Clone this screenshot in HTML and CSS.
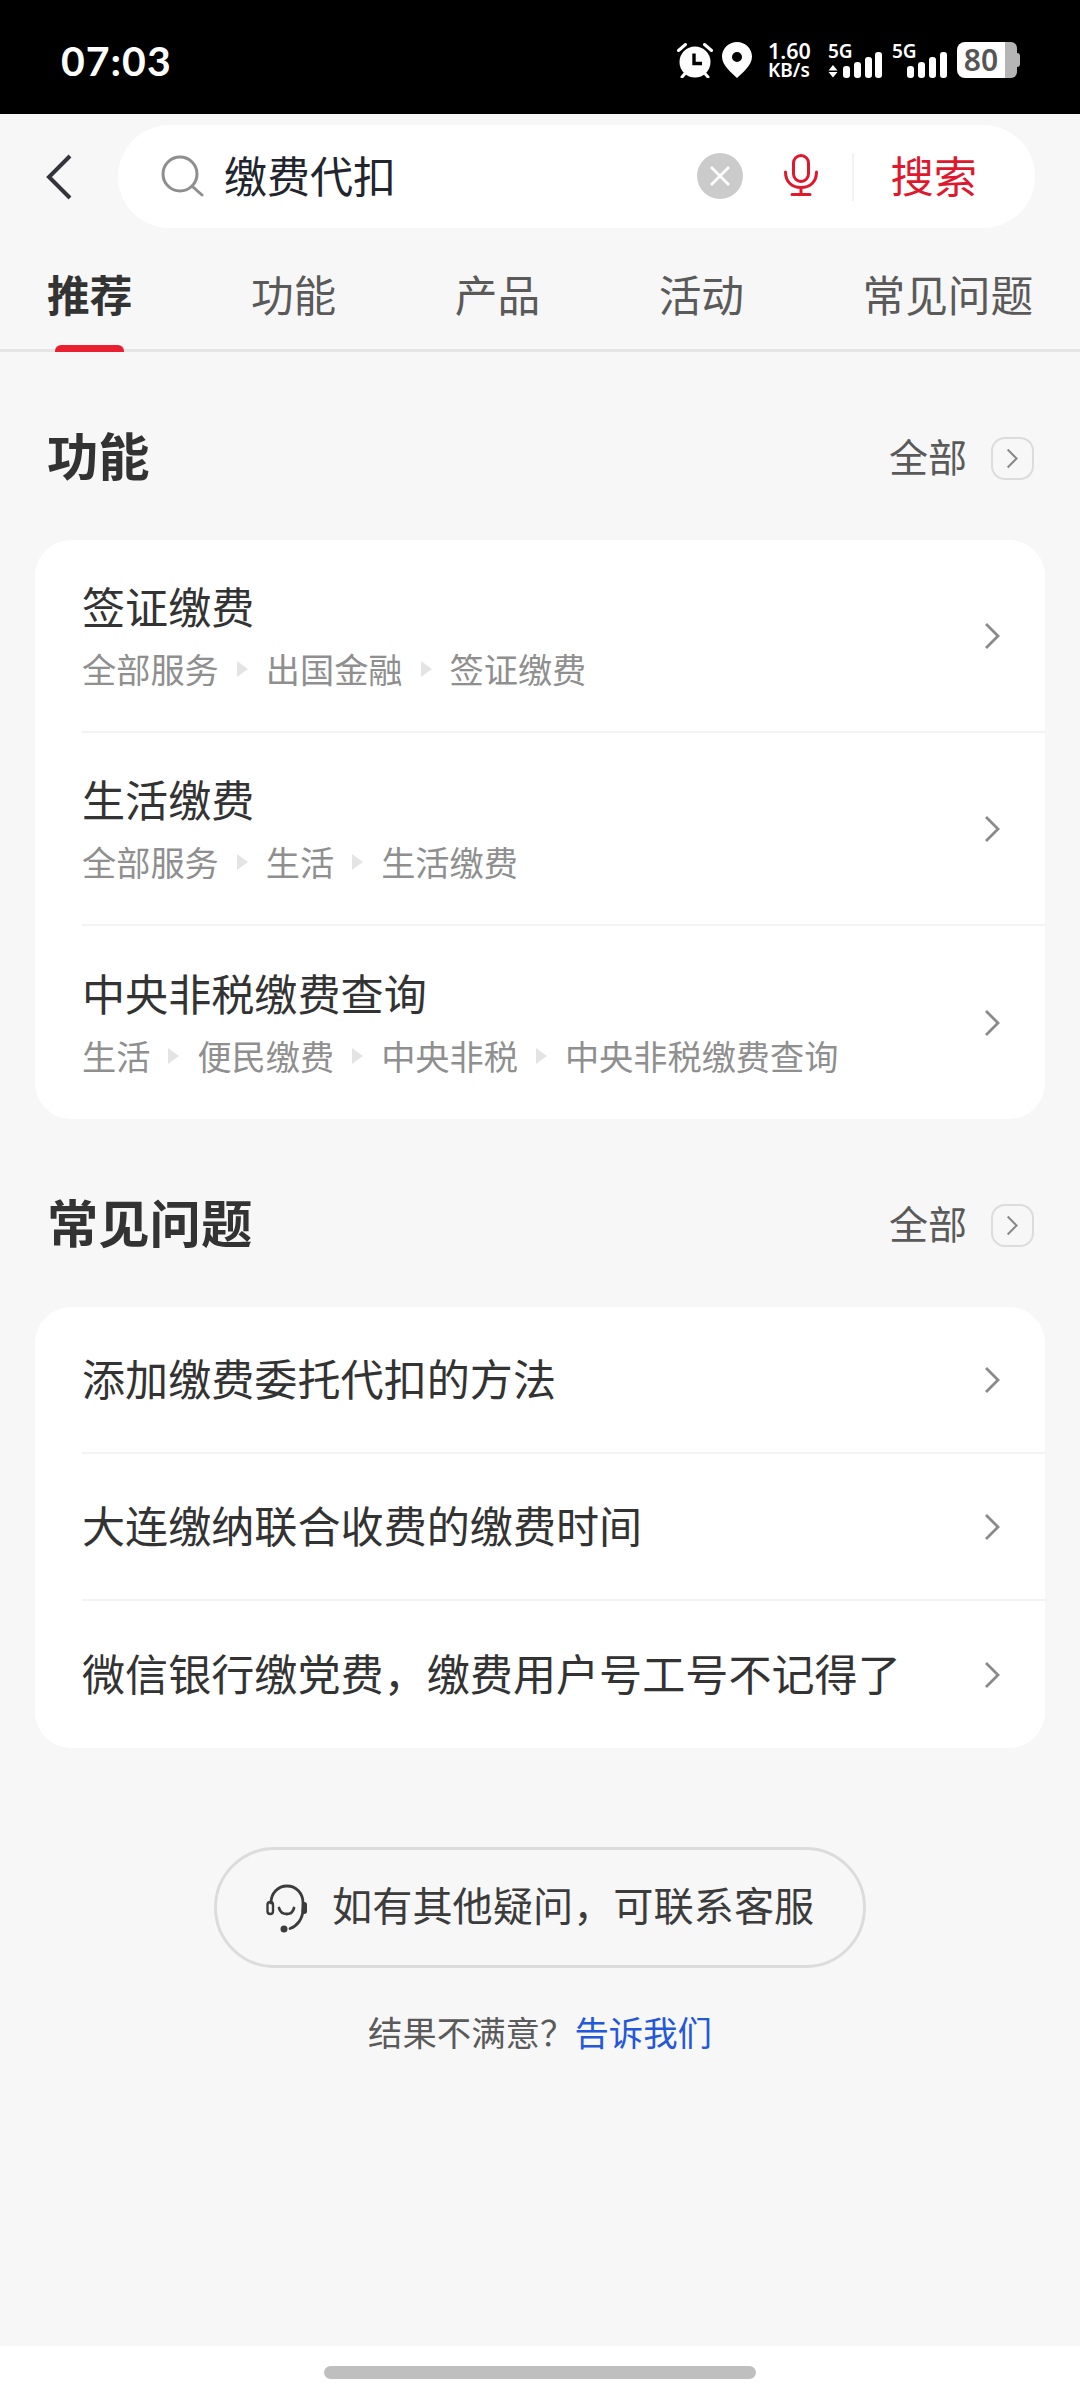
FILE: index.html
```html
<!DOCTYPE html>
<html lang="zh-CN">
<head>
<meta charset="utf-8">
<title>搜索</title>
<link rel="stylesheet" href="styles.css">
</head>
<body>
<div class="page">
  <div class="status">
    <span class="time">07:03</span>
    <div class="status-icons">
      <svg class="ic-alarm" viewBox="0 0 36 36" width="36" height="36">
        <circle cx="18" cy="20" r="15.5" fill="#fff"/>
        <path d="M17 11.5V21.5H25" fill="none" stroke="#000" stroke-width="3.4"/>
        <path d="M1.5 8.5 8.5 2.5M34.5 8.5 27.5 2.5M5 35l3.5-4M31 35l-3.5-4" stroke="#fff" stroke-width="3" stroke-linecap="round"/>
      </svg>
      <svg class="ic-pin" viewBox="0 0 30 36" width="30" height="36">
        <path fill-rule="evenodd" fill="#fff" d="M15 0C6.7 0 0 6.5 0 14.6 0 24 10.5 31.7 15 36c4.5-4.3 15-12 15-21.4C30 6.500 23.300 0 15 0Zm0 10a5 5 0 1 1 0 10 5 5 0 0 1 0-10Z"/>
      </svg>
      <div class="speed"><span class="speed-num">1.60</span><span class="speed-unit">KB/s</span></div>
      <div class="net net-first">
        <span class="net-label">5G</span>
        <svg viewBox="0 0 54 26" width="54" height="26" class="net-bars">
          <path fill="#fff" d="M5 13 9.500 18.500H.5ZM5 25.500 .5 20H9.500Z"/>
          <rect x="15" y="14" width="7" height="12" rx="3" fill="#fff"/>
          <rect x="26" y="10" width="7" height="16" rx="3" fill="#fff"/>
          <rect x="37" y="5" width="7" height="21" rx="3" fill="#fff"/>
          <rect x="47" y="0" width="7" height="26" rx="3" fill="#fff"/>
        </svg>
      </div>
      <div class="net net-second">
        <span class="net-label">5G</span>
        <svg viewBox="0 0 40 26" width="40" height="26" class="net-bars">
          <rect x="0" y="14" width="7" height="12" rx="3" fill="#fff"/>
          <rect x="11" y="10" width="7" height="16" rx="3" fill="#fff"/>
          <rect x="22" y="5" width="7" height="21" rx="3" fill="#fff"/>
          <rect x="33" y="0" width="7" height="26" rx="3" fill="#fff"/>
        </svg>
      </div>
      <div class="battery"><span class="battery-num">80</span><span class="battery-rest"></span><span class="battery-nub"></span></div>
    </div>
  </div>

  <div class="search-row">
    <svg class="back" viewBox="0 0 26 46" width="26" height="46"><path d="M24 2 3 23l21 21" fill="none" stroke="#33343c" stroke-width="4"/></svg>
    <div class="search-box">
      <svg class="lens" viewBox="0 0 44 44" width="44" height="44">
        <circle cx="20" cy="20" r="17" fill="none" stroke="#8e8e8e" stroke-width="3"/>
        <path d="M33 33l9 8" stroke="#8e8e8e" stroke-width="3" stroke-linecap="round"/>
      </svg>
      <span class="query">缴费代扣</span>
      <svg class="clear" viewBox="0 0 46 46" width="46" height="46">
        <circle cx="23" cy="23" r="23" fill="#cbcbcb"/>
        <path d="M14 14l18 18M32 14 14 32" stroke="#fff" stroke-width="2.600"/>
      </svg>
      <svg class="mic" viewBox="0 0 34 42" width="34" height="42">
        <rect x="9.500" y="1.500" width="15" height="26" rx="7.500" fill="none" stroke="#e0182d" stroke-width="3"/>
        <path d="M1.500 18c0 10 6.500 15.500 15.500 15.500S32.500 28 32.500 18M17 33.500V40M8 40.500H26" fill="none" stroke="#e0182d" stroke-width="3" stroke-linecap="round"/>
      </svg>
      <span class="search-sep"></span>
      <span class="search-btn">搜索</span>
    </div>
  </div>

  <nav class="tabs">
    <span class="tab tab-active">推荐</span>
    <span class="tab">功能</span>
    <span class="tab">产品</span>
    <span class="tab">活动</span>
    <span class="tab">常见问题</span>
  </nav>

  <main class="content">
    <section class="section">
      <div class="section-head">
        <h2 class="section-title">功能</h2>
        <span class="more">全部</span>
        <span class="more-box"><svg viewBox="0 0 16 26" width="13" height="21"><path d="M2 2l11 11L2 24" fill="none" stroke="#8a8a8a" stroke-width="2.600"/></svg></span>
      </div>
      <div class="card">
        <div class="row row-tall">
          <div class="row-text">
            <div class="row-title">签证缴费</div>
            <div class="crumbs"><span>全部服务</span><i class="tri"></i><span>出国金融</span><i class="tri"></i><span>签证缴费</span></div>
          </div>
          <svg class="chev" viewBox="0 0 16 28" width="16" height="28"><path d="M2 2l12 12L2 26" fill="none" stroke="#8a8a8a" stroke-width="2.800"/></svg>
        </div>
        <div class="row row-tall">
          <div class="row-text">
            <div class="row-title">生活缴费</div>
            <div class="crumbs"><span>全部服务</span><i class="tri"></i><span>生活</span><i class="tri"></i><span>生活缴费</span></div>
          </div>
          <svg class="chev" viewBox="0 0 16 28" width="16" height="28"><path d="M2 2l12 12L2 26" fill="none" stroke="#8a8a8a" stroke-width="2.800"/></svg>
        </div>
        <div class="row row-tall">
          <div class="row-text">
            <div class="row-title">中央非税缴费查询</div>
            <div class="crumbs"><span>生活</span><i class="tri"></i><span>便民缴费</span><i class="tri"></i><span>中央非税</span><i class="tri"></i><span>中央非税缴费查询</span></div>
          </div>
          <svg class="chev" viewBox="0 0 16 28" width="16" height="28"><path d="M2 2l12 12L2 26" fill="none" stroke="#8a8a8a" stroke-width="2.800"/></svg>
        </div>
      </div>
    </section>

    <section class="section">
      <div class="section-head">
        <h2 class="section-title">常见问题</h2>
        <span class="more">全部</span>
        <span class="more-box"><svg viewBox="0 0 16 26" width="13" height="21"><path d="M2 2l11 11L2 24" fill="none" stroke="#8a8a8a" stroke-width="2.600"/></svg></span>
      </div>
      <div class="card">
        <div class="row row-short">
          <div class="row-title">添加缴费委托代扣的方法</div>
          <svg class="chev" viewBox="0 0 16 28" width="16" height="28"><path d="M2 2l12 12L2 26" fill="none" stroke="#8a8a8a" stroke-width="2.800"/></svg>
        </div>
        <div class="row row-short">
          <div class="row-title">大连缴纳联合收费的缴费时间</div>
          <svg class="chev" viewBox="0 0 16 28" width="16" height="28"><path d="M2 2l12 12L2 26" fill="none" stroke="#8a8a8a" stroke-width="2.800"/></svg>
        </div>
        <div class="row row-short">
          <div class="row-title">微信银行缴党费，缴费用户号工号不记得了</div>
          <svg class="chev" viewBox="0 0 16 28" width="16" height="28"><path d="M2 2l12 12L2 26" fill="none" stroke="#8a8a8a" stroke-width="2.800"/></svg>
        </div>
      </div>
    </section>

    <div class="service-wrap">
      <div class="service">
        <svg class="headset" viewBox="0 0 42 50" width="42" height="50">
          <path d="M5 20C5 10 12 3 21 3s16 7 16 17M37 26c0 10-6 17-13 19.500M13 25c1 4 4.500 6 8 6s6-2 7-6" fill="none" stroke="#3c3c3c" stroke-width="2.800" stroke-linecap="round"/>
          <rect x="1.500" y="19" width="5.500" height="12" rx="2.700" fill="none" stroke="#3c3c3c" stroke-width="2.400"/>
          <rect x="35.500" y="19" width="5.500" height="12" rx="2.700" fill="#3c3c3c"/>
          <circle cx="18" cy="46" r="3.500" fill="#3c3c3c"/>
        </svg>
        <span class="service-text">如有其他疑问，可联系客服</span>
      </div>
    </div>
    <p class="feedback">结果不满意？<a class="feedback-link">告诉我们</a></p>
  </main>

  <div class="home"><span class="home-pill"></span></div>
</div>
</body>
</html>
```
FILE: styles.css
```css
* { box-sizing: border-box; }
html, body { margin: 0; padding: 0; }
body {
  width: 1080px;
  height: 2400px;
  overflow: hidden;
  background: #f7f7f7;
  font-family: "Noto Sans CJK SC", "Noto Sans", sans-serif;
  color: #333;
}
.page { display: flex; flex-direction: column; height: 2400px; }

/* status bar */
.status {
  flex: none;
  height: 114px;
  background: #000;
  color: #fff;
  display: flex;
  align-items: center;
  justify-content: space-between;
  padding: 6px 60px 0 61px;
}
.time { font-family: Lato, sans-serif; font-size: 41px; font-weight: 700; letter-spacing: 1px; line-height: 1; }
.status-icons { display: flex; align-items: center; height: 36px; }
.ic-pin { margin-left: 9px; }
.speed { margin-left: 16px; width: 42px; display: flex; flex-direction: column; align-items: flex-start; font-family: "Noto Sans", sans-serif; font-weight: 600; white-space: nowrap; }
.speed-num { font-size: 21.5px; line-height: 20px; }
.speed-unit { font-size: 19px; line-height: 17px; margin-top: 1px; }
.net { position: relative; height: 36px; display: flex; align-items: flex-end; flex: none; }
.net-first { margin-left: 18px; width: 54px; }
.net-second { margin-left: 10px; width: 55px; justify-content: flex-end; }
.net-label { position: absolute; left: 0; top: 0; font-family: "Noto Sans", sans-serif; font-size: 19px; font-weight: 600; line-height: 18px; }
.net-bars { display: block; }
.battery { margin-left: 10px; display: flex; align-items: center; height: 36px; }
.battery-num {
  width: 48px; height: 36px;
  background: #fff; color: #555;
  border-radius: 8px 0 0 8px;
  font-family: "Noto Sans", sans-serif; font-size: 30px; font-weight: 600; line-height: 36px;
  text-align: center;
}
.battery-rest { width: 12px; height: 36px; background: #b5b5b5; border-radius: 0 6px 6px 0; }
.battery-nub { width: 3px; height: 14px; background: #b5b5b5; border-radius: 0 3px 3px 0; }

/* search */
.search-row { flex: none; display: flex; align-items: center; height: 103px; margin-top: 11px; padding: 0 45px 0 46px; }
.back { flex: none; margin-right: 46px; }
.search-box {
  flex: 1;
  height: 103px;
  background: #fff;
  border-radius: 52px;
  display: flex;
  align-items: center;
  padding: 0 58px 0 42px;
}
.lens { flex: none; margin-bottom: 1px; }
.query { flex: 1; margin-left: 20px; padding-bottom: 6px; font-size: 43px; line-height: 60px; color: #22252e; }
.clear { flex: none; margin-bottom: 1px; }
.mic { flex: none; margin-left: 41px; margin-bottom: 4px; }
.search-sep { flex: none; width: 2px; height: 48px; background: #f2f2f2; margin: 0 36px 0 34px; }
.search-btn { padding-bottom: 6px; font-size: 43.3px; line-height: 60px; color: #e0182d; }

/* tabs */
.tabs {
  flex: none;
  display: flex;
  gap: 118.5px;
  height: 124px;
  padding: 9px 0 0 47px;
  align-items: center;
  border-bottom: 3px solid #e5e5e5;
}
.tab { position: relative; font-size: 42.7px; line-height: 60px; color: #5a5a5a; white-space: nowrap; }
.tab-active { font-weight: 700; color: #333; }
.tab-active::after {
  content: "";
  position: absolute;
  left: 8px;
  bottom: -29px;
  width: 69px;
  height: 7px;
  background: #e8202f;
  border-radius: 6px 6px 0 0;
}

/* content */
.content { flex: 1; min-height: 0; }
.section-head { display: flex; align-items: center; height: 44px; margin: 84px 0 60px; padding: 0 46px 0 47px; }
.section-title { flex: 1; margin: 0; padding-bottom: 9px; font-size: 51.3px; line-height: 44px; font-weight: 700; color: #333; }
.more { padding-bottom: 6px; font-size: 39px; line-height: 44px; color: #5a5a5a; margin-right: 24px; }
.more-box {
  flex: none;
  width: 43px; height: 43px;
  border: 2px solid #dcdcdc;
  border-radius: 14px;
  display: flex; align-items: center; justify-content: center;
}
.card { margin: 0 35px; background: #fff; border-radius: 36px; overflow: hidden; padding-left: 47px; }
.row { display: flex; align-items: center; justify-content: space-between; padding-right: 45px; border-bottom: 2px solid #f3f3f3; }
.row:last-child { border-bottom: 0; }
.row-tall { height: 193px; }
.row-short { height: 147px; }
.row-text { padding-bottom: 3px; }
.row-title { font-size: 43.1px; line-height: 60px; color: #333; white-space: nowrap; }
.row-short .row-title { padding-bottom: 6px; }
.crumbs { display: flex; align-items: center; margin-top: 8px; font-size: 34.2px; line-height: 50px; color: #8f8f8f; }
.tri {
  flex: none;
  width: 0; height: 0;
  margin: 2px 18px 0;
  border-style: solid;
  border-width: 8px 0 8px 11px;
  border-color: transparent transparent transparent #e4e4e4;
}
.chev { flex: none; }

/* service */
.service-wrap { display: flex; justify-content: center; margin-top: 99px; }
.service {
  width: 652px; height: 121px;
  border: 3px solid #dcdcdc;
  border-radius: 61px;
  display: flex; align-items: center;
  padding-left: 49px;
}
.headset { flex: none; }
.service-text { margin-left: 24px; padding-bottom: 8px; font-size: 40.2px; line-height: 60px; color: #3c3c3c; white-space: nowrap; }
.feedback { margin: 38px 0 0; text-align: center; font-size: 34.4px; line-height: 50px; color: #5a5a5a; }
.feedback-link { color: #2458d8; }

/* home indicator */
.home { flex: none; height: 54px; background: #fff; display: flex; justify-content: center; padding-top: 20px; }
.home-pill { width: 432px; height: 13px; border-radius: 7px; background: #bfbfbf; }
```
